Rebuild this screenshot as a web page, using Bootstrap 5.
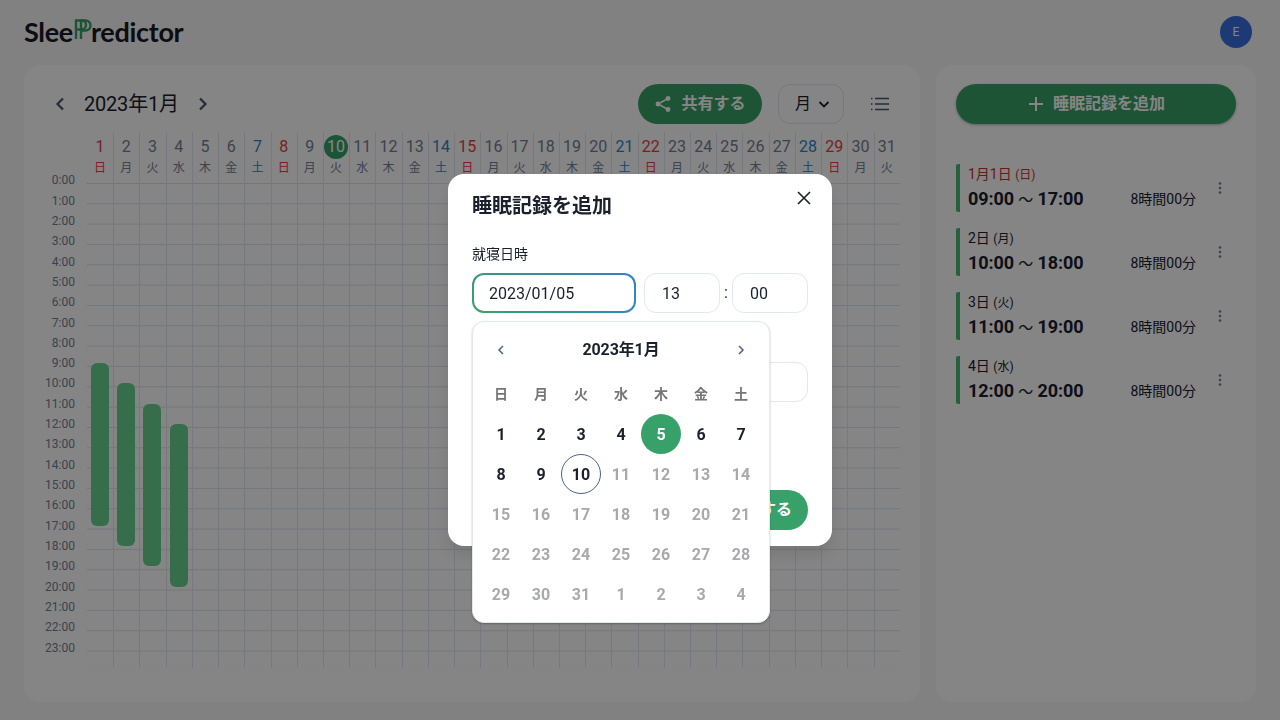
<!DOCTYPE html>
<html lang="ja">
<head>
  <meta charset="UTF-8">
  <meta name="viewport" content="width=device-width, initial-scale=1.0">
  <title>SleepPredictor</title>
  <link href="https://cdn.jsdelivr.net/npm/bootstrap@5.3.0/dist/css/bootstrap.min.css" rel="stylesheet">
  <style>
    body {
      background: #f7f7f7;
      color: #1a202c;
      font-family: Roboto, "Noto Sans CJK JP", sans-serif;
      height: 720px;
      overflow: hidden;
    }
    .top-bar { height: 64px; padding: 0 28px 0 24px; }
    .logo-text { font-family: Lato, sans-serif; font-weight: 700; font-size: 27px; line-height: 32px; letter-spacing: -.3px; color: #171923; }
    .logo-mark { width: 20px; height: 23px; margin: -6px -1px 0 -1px; flex: none; }
    .user-circle { width: 32px; height: 32px; background: #3b6fe0; color: #fff; font-size: 12px; }
    .main-area { padding: 1px 24px 0; gap: 16px; }
    .panel { background: #fff; border-radius: 16px; height: 637px; }
    .cal-panel { width: 896px; padding: 19px 20px 0 0; }
    .list-panel { width: 320px; padding: 19px 20px; }
    .tool-row { height: 40px; }
    .cal-title { font-size: 20px; width: 95px; margin: 0 12px; white-space: nowrap; letter-spacing: -.2px; }
    .green-btn { background: #38a169; color: #fff; border: 0; border-radius: 20px; font-weight: 700; font-size: 16px; height: 40px; }
    .share-btn { width: 124px; gap: 9px; }
    .month-box { width: 66px; height: 40px; border: 1px solid #e2e8f0; border-radius: 12px; margin: 0 16px; padding-left: 3px; font-size: 16px; gap: 7px; }
    .list-icon { width: 40px; }
    .cal-body { margin-top: 8px; }
    .hour-col { flex: none; width: 51px; margin-right: 12px; padding-top: 48px; }
    .hour-label { height: 20.33px; font-size: 12px; line-height: 20px; color: #718096; text-align: right; margin-top: -9.8px; margin-bottom: 9.8px; }
    .day-col { width: 26.23px; border-left: 1px solid #e2e8f0; position: relative; height: 536px; }
    .day-col:first-child { border-left: 0; }
    .day-head { height: 48px; text-align: center; color: #718096; margin-left: -1px; }
    .day-col:first-child .day-head { margin-left: 0; }
    .day-num { font-size: 16px; line-height: 24px; margin: 3px auto 0; width: 24px; height: 24px; border-radius: 50%; }
    .day-week { font-size: 12px; line-height: 16px; margin-top: 1px; }
    .is-sun { color: #e53e3e; }
    .is-sat { color: #3182ce; }
    .is-today .day-num { background: #38a169; color: #fff; }
    .hour-cells { height: 488px; background-image: linear-gradient(#dde3ec 1px, transparent 1px); background-size: 100% 20.33px; }
    .sleep-bar { position: absolute; left: 3px; width: 18px; background: #68d391; border-radius: 6px; }
    .day-col:first-child .sleep-bar { left: 4px; }
    .add-btn { width: 100%; box-shadow: 0 1px 3px rgba(0,0,0,.3); }
    .rec-list { margin-top: 40px; }
    .rec-item { height: 48px; margin-bottom: 16px; border-left: 4px solid #48bb78; border-radius: 2px; padding-left: 8px; }
    .rec-body { padding-top: 2px; }
    .rec-date { font-size: 14px; line-height: 20px; }
    .rec-date.is-sun { color: #c53030; }
    .rec-date small { font-size: 12px; }
    .rec-time { font-size: 18px; font-weight: 700; line-height: 28px; letter-spacing: -.1px; }
    .rec-time span { font-weight: 400; font-size: 15px; }
    .rec-len { font-size: 14px; line-height: 28px; margin-left: auto; }
    .rec-menu { width: 40px; padding-left: 8px; }
    /* modal */
    .modal-backdrop.show { opacity: .48; }
    .sheet { width: 384px; height: 372px; margin: 174px 0 0 448px; border: 0; border-radius: 16px; box-shadow: 0 10px 15px rgba(0,0,0,.1); padding: 17px 24px 16px; position: relative; }
    .sheet-title { font-size: 20px; font-weight: 700; line-height: 30px; margin-bottom: 23px; }
    .sheet-close { position: absolute; top: 16px; right: 12px; width: 32px; height: 16px; padding: 0; }
    .sheet-label { font-size: 14px; line-height: 20px; margin-bottom: 9px; }
    .sheet-input { height: 40px; border: 1px solid #e2e8f0; border-radius: 12px; padding: 0 16px; font-size: 16px; color: #1a202c; box-shadow: none; }
    .date-input { width: 164px; }
    .date-input.is-focus { border: 2px solid transparent; padding: 0 15px; background: linear-gradient(#fff, #fff) padding-box, linear-gradient(45deg, #38a169, #3182ce) border-box; }
    .time-input { width: 76px; padding-left: 17px; }
    .time-sep { width: 13px; text-align: center; }
    .second-row { margin-top: 20px; }
    .save-btn { position: absolute; right: 24px; bottom: 16px; padding: 0 16px; }
    .pick-box { position: absolute; left: 24px; top: 147px; width: 298px; height: 302px; background: #fff; border: 1px solid #e2e8f0; border-radius: 12px; box-shadow: 0 1px 2px rgba(0,0,0,.25); z-index: 5; padding: 8px; }
    .pick-head { height: 40px; font-size: 16px; font-weight: 700; letter-spacing: -.1px; }
    .pick-grid { display: grid; grid-template-columns: repeat(7, 40px); grid-auto-rows: 40px; margin-top: 4px; }
    .pick-cell { display: flex; align-items: center; justify-content: center; font-size: 16px; font-weight: 700; border-radius: 50%; color: #1a202c; padding-top: 2px; }
    .pick-week { font-size: 14px; color: #75767a; padding-top: 0; }
    .pick-off { color: #a8a9ad; }
    .pick-sel { background: #38a169; color: #fff; }
    .pick-now { border: 1px solid #4a5f8a; }
  </style>
</head>
<body>

  <!-- Header -->
  <header class="top-bar d-flex align-items-center justify-content-between">
    <div class="logo-text d-flex align-items-center">Slee<svg class="logo-mark" viewBox="0 0 20 23" fill="none" stroke="#38a169" stroke-width="2.400"><path d="M4 21V2.500h5.500a4.500 4.500 0 0 1 0 9H4"/><path d="M9 21V2.500h4.500a5 5 0 0 1 0 10H9"/></svg>redictor</div>
    <div class="user-circle rounded-circle d-flex align-items-center justify-content-center">E</div>
  </header>

  <main class="main-area d-flex">
    <!-- Calendar -->
    <section class="panel cal-panel">
      <div class="tool-row d-flex align-items-center">
        <svg class="ms-4" width="24" height="24" viewBox="0 0 24 24" fill="none" stroke="#4a5568" stroke-width="2.200"><path d="M15 6.500l-5.500 5.500 5.500 5.500"/></svg>
        <div class="cal-title">2023年1月</div>
        <svg width="24" height="24" viewBox="0 0 24 24" fill="none" stroke="#4a5568" stroke-width="2.200"><path d="M9 6.500l5.500 5.500-5.500 5.500"/></svg>
        <button class="green-btn share-btn ms-auto d-flex align-items-center justify-content-center">
          <svg width="18" height="18" viewBox="0 0 18 18" fill="#fff" stroke="#fff" stroke-width="1.500"><circle cx="14" cy="3.500" r="1.700"/><circle cx="4" cy="9" r="1.700"/><circle cx="14" cy="14.500" r="1.700"/><path d="M14 3.500L4 9l10 5.500" fill="none"/></svg>
          共有する
        </button>
        <div class="month-box d-flex align-items-center justify-content-center">月
          <svg width="12" height="12" viewBox="0 0 12 12" fill="none" stroke="#1a202c" stroke-width="1.800"><path d="M1.500 4l4.500 4.500L10.500 4"/></svg>
        </div>
        <div class="list-icon d-flex justify-content-center">
          <svg width="20" height="16" viewBox="0 0 20 16" fill="none" stroke="#4a5568" stroke-width="1.500"><path d="M5 2.500h14M5 8h14M5 13.500h14M1 2.500h1.500M1 8h1.500M1 13.500h1.500"/></svg>
        </div>
      </div>
      <div class="cal-body d-flex">
        <div class="hour-col" id="hourCol"></div>
        <div class="d-flex" id="dayCols"></div>
      </div>
    </section>

    <!-- Sleep records -->
    <aside class="panel list-panel">
      <button class="green-btn add-btn d-flex align-items-center justify-content-center gap-2">
        <svg width="18" height="18" viewBox="0 0 18 18" stroke="#fff" stroke-width="2"><path d="M9 2v14M2 9h14"/></svg>
        睡眠記録を追加
      </button>
      <div class="rec-list" id="recList"></div>
    </aside>
  </main>

  <!-- Add record modal -->
  <div class="modal-backdrop show"></div>
  <div class="modal d-block" tabindex="-1">
    <div class="modal-content sheet">
      <div class="sheet-title">睡眠記録を追加</div>
      <button class="btn sheet-close d-flex justify-content-center align-items-center" aria-label="Close">
        <svg width="16" height="16" viewBox="0 0 16 16" stroke="#1a202c" stroke-width="1.600"><path d="M2 2l12 12M14 2L2 14"/></svg>
      </button>
      <div class="sheet-label">就寝日時</div>
      <div class="d-flex align-items-center">
        <input class="form-control sheet-input date-input is-focus me-2" value="2023/01/05">
        <input class="form-control sheet-input time-input" value="13">
        <span class="time-sep">:</span>
        <input class="form-control sheet-input time-input" value="00">
      </div>
      <div class="sheet-label second-row">起床日時</div>
      <div class="d-flex align-items-center">
        <input class="form-control sheet-input date-input me-2" value="">
        <input class="form-control sheet-input time-input" value="">
        <span class="time-sep">:</span>
        <input class="form-control sheet-input time-input" value="">
      </div>
      <button class="green-btn save-btn">追加する</button>

      <div class="pick-box">
        <div class="pick-head d-flex align-items-center justify-content-between px-2">
          <svg width="24" height="24" viewBox="0 0 24 24" fill="none" stroke="#4a5f8a" stroke-width="1.500"><path d="M14 8l-4 4 4 4"/></svg>
          2023年1月
          <svg width="24" height="24" viewBox="0 0 24 24" fill="none" stroke="#4a5f8a" stroke-width="1.500"><path d="M10 8l4 4-4 4"/></svg>
        </div>
        <div class="pick-grid" id="pickGrid"></div>
      </div>
    </div>
  </div>

  <script src="https://cdn.jsdelivr.net/npm/bootstrap@5.3.0/dist/js/bootstrap.bundle.min.js"></script>
  <script>
    const weekNames = ['日', '月', '火', '水', '木', '金', '土'];
    const ROW = 20.33;

    // hour labels
    let hoursHtml = '';
    for (let h = 0; h < 24; h++) {
      hoursHtml += `<div class="hour-label">${h}:00</div>`;
    }
    document.getElementById('hourCol').innerHTML = hoursHtml;

    // sleep data: day of month, start hour, end hour
    const sleeps = [[1, 9, 17], [2, 10, 18], [3, 11, 19], [4, 12, 20]];

    // month columns
    let daysHtml = '';
    for (let d = 1; d <= 31; d++) {
      const w = (d - 1) % 7;
      const cls = w === 0 ? 'is-sun' : w === 6 ? 'is-sat' : '';
      const today = d === 10 ? 'is-today' : '';
      const s = sleeps.find(x => x[0] === d);
      const bar = s ? `<div class="sleep-bar" style="top:${48 + s[1] * ROW}px;height:${(s[2] - s[1]) * ROW}px"></div>` : '';
      daysHtml += `<div class="day-col">
        <div class="day-head ${cls} ${today}"><div class="day-num">${d}</div><div class="day-week">${weekNames[w]}</div></div>
        <div class="hour-cells"></div>${bar}</div>`;
    }
    document.getElementById('dayCols').innerHTML = daysHtml;

    // record list
    let recHtml = '';
    sleeps.forEach((s, i) => {
      const pad = n => String(n).padStart(2, '0');
      const label = i === 0 ? '1月1日' : `${s[0]}日`;
      recHtml += `<div class="rec-item d-flex align-items-center">
        <div class="rec-body flex-grow-1">
          <div class="rec-date ${i === 0 ? 'is-sun' : ''}">${label} <small>(${weekNames[i]})</small></div>
          <div class="d-flex"><div class="rec-time">${pad(s[1])}:00 <span>〜</span> ${s[2]}:00</div><div class="rec-len">8時間00分</div></div>
        </div>
        <div class="rec-menu d-flex justify-content-center">
          <svg width="4" height="12" viewBox="0 0 4 12" fill="#718096"><circle cx="2" cy="1.500" r="1.300"/><circle cx="2" cy="6" r="1.300"/><circle cx="2" cy="10.500" r="1.300"/></svg>
        </div>
      </div>`;
    });
    document.getElementById('recList').innerHTML = recHtml;

    // date picker
    let pickHtml = weekNames.map(n => `<div class="pick-cell pick-week">${n}</div>`).join('');
    const trailing = [1, 2, 3, 4];
    for (let d = 1; d <= 31; d++) {
      let cls = d > 10 ? 'pick-off' : '';
      if (d === 5) cls = 'pick-sel';
      if (d === 10) cls = 'pick-now';
      pickHtml += `<div class="pick-cell ${cls}">${d}</div>`;
    }
    trailing.forEach(d => { pickHtml += `<div class="pick-cell pick-off">${d}</div>`; });
    document.getElementById('pickGrid').innerHTML = pickHtml;
  </script>
</body>
</html>
